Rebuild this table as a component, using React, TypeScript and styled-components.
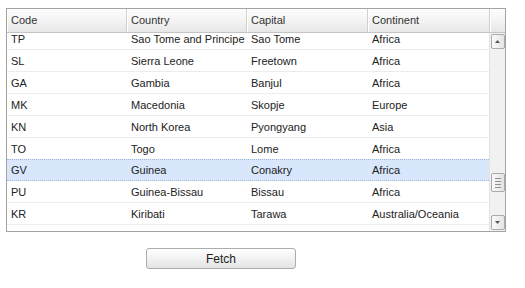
import React from 'react';
import styled, { createGlobalStyle } from 'styled-components';

const GlobalStyle = createGlobalStyle`
  body {
    margin: 0;
    background: #fff;
    font-family: "Liberation Sans", Arial, sans-serif;
  }
`;

const Page = styled.div`
  padding: 8px 0 0 6px;
  width: 525px;
  height: 288px;
  box-sizing: border-box;
`;

const Grid = styled.div`
  width: 500px;
  height: 224px;
  border: 1px solid #a3a3a3;
  box-sizing: border-box;
  display: flex;
  flex-direction: column;
  overflow: hidden;
`;

const cols = '120px 120px 121px 122px';

const Header = styled.div`
  display: grid;
  grid-template-columns: ${cols} 1fr;
  height: 23px;
  flex: none;
  background: linear-gradient(#fefefe, #f3f3f3 50%, #e7e7e7);
  border-bottom: 1px solid #c4c4c4;
`;

const HeadCell = styled.div`
  padding-left: 4px;
  line-height: 23px;
  font-size: 11px;
  color: #333;
  border-right: 1px solid #d0d0d0;
  box-shadow: inset 1px 0 0 #fff;
  white-space: nowrap;
  overflow: hidden;
`;

const Filler = styled.div`
  box-shadow: inset 1px 0 0 #fff;
`;

const Body = styled.div`
  flex: 1;
  display: flex;
  min-height: 0;
`;

const Viewport = styled.div`
  flex: 1;
  overflow: hidden;
`;

const Rows = styled.div`
  margin-top: -5px;
`;

const Row = styled.div<{ $selected?: boolean }>`
  display: grid;
  grid-template-columns: ${cols};
  height: 22px;
  box-sizing: border-box;
  border-bottom: 1px ${p => (p.$selected ? 'dotted #9fb6d6' : 'solid #ececec')};
  border-top: 1px ${p => (p.$selected ? 'dotted #9fb6d6' : 'solid transparent')};
  margin-top: ${p => (p.$selected ? '-1px' : '0')};
  background: ${p => (p.$selected ? '#d8e7fb' : '#fff')};
`;

const Cell = styled.div`
  padding-left: 4px;
  line-height: 20px;
  font-size: 11px;
  color: #222;
  white-space: nowrap;
  overflow: hidden;
`;

const Scrollbar = styled.div`
  width: 16px;
  flex: none;
  background: #f1f1f1;
  border-left: 1px solid #e2e2e2;
  display: flex;
  flex-direction: column;
  align-items: center;
  padding: 1px 0;
  box-sizing: border-box;
`;

const ScrollButton = styled.div`
  width: 14px;
  height: 15px;
  box-sizing: border-box;
  border: 1px solid #aaaaaa;
  border-radius: 2px;
  background: linear-gradient(90deg, #fafafa, #e4e4e4);
  display: flex;
  align-items: center;
  justify-content: center;
  flex: none;
`;

const Track = styled.div<{ $top: number }>`
  flex: 1;
  width: 100%;
  display: flex;
  flex-direction: column;
  align-items: center;
  padding-top: ${p => p.$top}px;
`;

const Thumb = styled.div`
  width: 14px;
  height: 19px;
  box-sizing: border-box;
  border: 1px solid #aaaaaa;
  border-radius: 2px;
  background: linear-gradient(90deg, #fafafa, #e2e2e2);
  display: flex;
  flex-direction: column;
  align-items: center;
  justify-content: center;
  gap: 2px;
`;

const Grip = styled.span`
  display: block;
  width: 6px;
  height: 1px;
  background: #909090;
`;

const ButtonBar = styled.div`
  padding: 16px 0 0 140px;
`;

const Button = styled.button`
  width: 150px;
  height: 21px;
  border: 1px solid #acacac;
  border-radius: 3px;
  background: linear-gradient(#ffffff, #f2f2f2 50%, #e3e3e3);
  font-family: "Liberation Sans", Arial, sans-serif;
  font-size: 12px;
  color: #222;
  padding: 0;
`;

const data = [
  ['TP', 'Sao Tome and Principe', 'Sao Tome', 'Africa'],
  ['SL', 'Sierra Leone', 'Freetown', 'Africa'],
  ['GA', 'Gambia', 'Banjul', 'Africa'],
  ['MK', 'Macedonia', 'Skopje', 'Europe'],
  ['KN', 'North Korea', 'Pyongyang', 'Asia'],
  ['TO', 'Togo', 'Lome', 'Africa'],
  ['GV', 'Guinea', 'Conakry', 'Africa'],
  ['PU', 'Guinea-Bissau', 'Bissau', 'Africa'],
  ['KR', 'Kiribati', 'Tarawa', 'Australia/Oceania'],
];

const Arrow = ({ up }: { up?: boolean }) => (
  <svg width="5" height="3" viewBox="0 0 5 3">
    <path d={up ? 'M0 3L2.5 0L5 3Z' : 'M0 0L2.5 3L5 0Z'} fill="#555" />
  </svg>
);

export default function App() {
  return (
    <Page>
      <GlobalStyle />
      <Grid>
        <Header>
          <HeadCell>Code</HeadCell>
          <HeadCell>Country</HeadCell>
          <HeadCell>Capital</HeadCell>
          <HeadCell>Continent</HeadCell>
          <Filler />
        </Header>
        <Body>
          <Viewport>
            <Rows>
              {data.map(r => (
                <Row key={r[0]} $selected={r[0] === 'GV'}>
                  {r.map((c, i) => (
                    <Cell key={i}>{c}</Cell>
                  ))}
                </Row>
              ))}
            </Rows>
          </Viewport>
          <Scrollbar>
            <ScrollButton>
              <Arrow up />
            </ScrollButton>
            <Track $top={124}>
              <Thumb>
                <Grip />
                <Grip />
                <Grip />
                <Grip />
              </Thumb>
            </Track>
            <ScrollButton>
              <Arrow />
            </ScrollButton>
          </Scrollbar>
        </Body>
      </Grid>
      <ButtonBar>
        <Button>Fetch</Button>
      </ButtonBar>
    </Page>
  );
}
